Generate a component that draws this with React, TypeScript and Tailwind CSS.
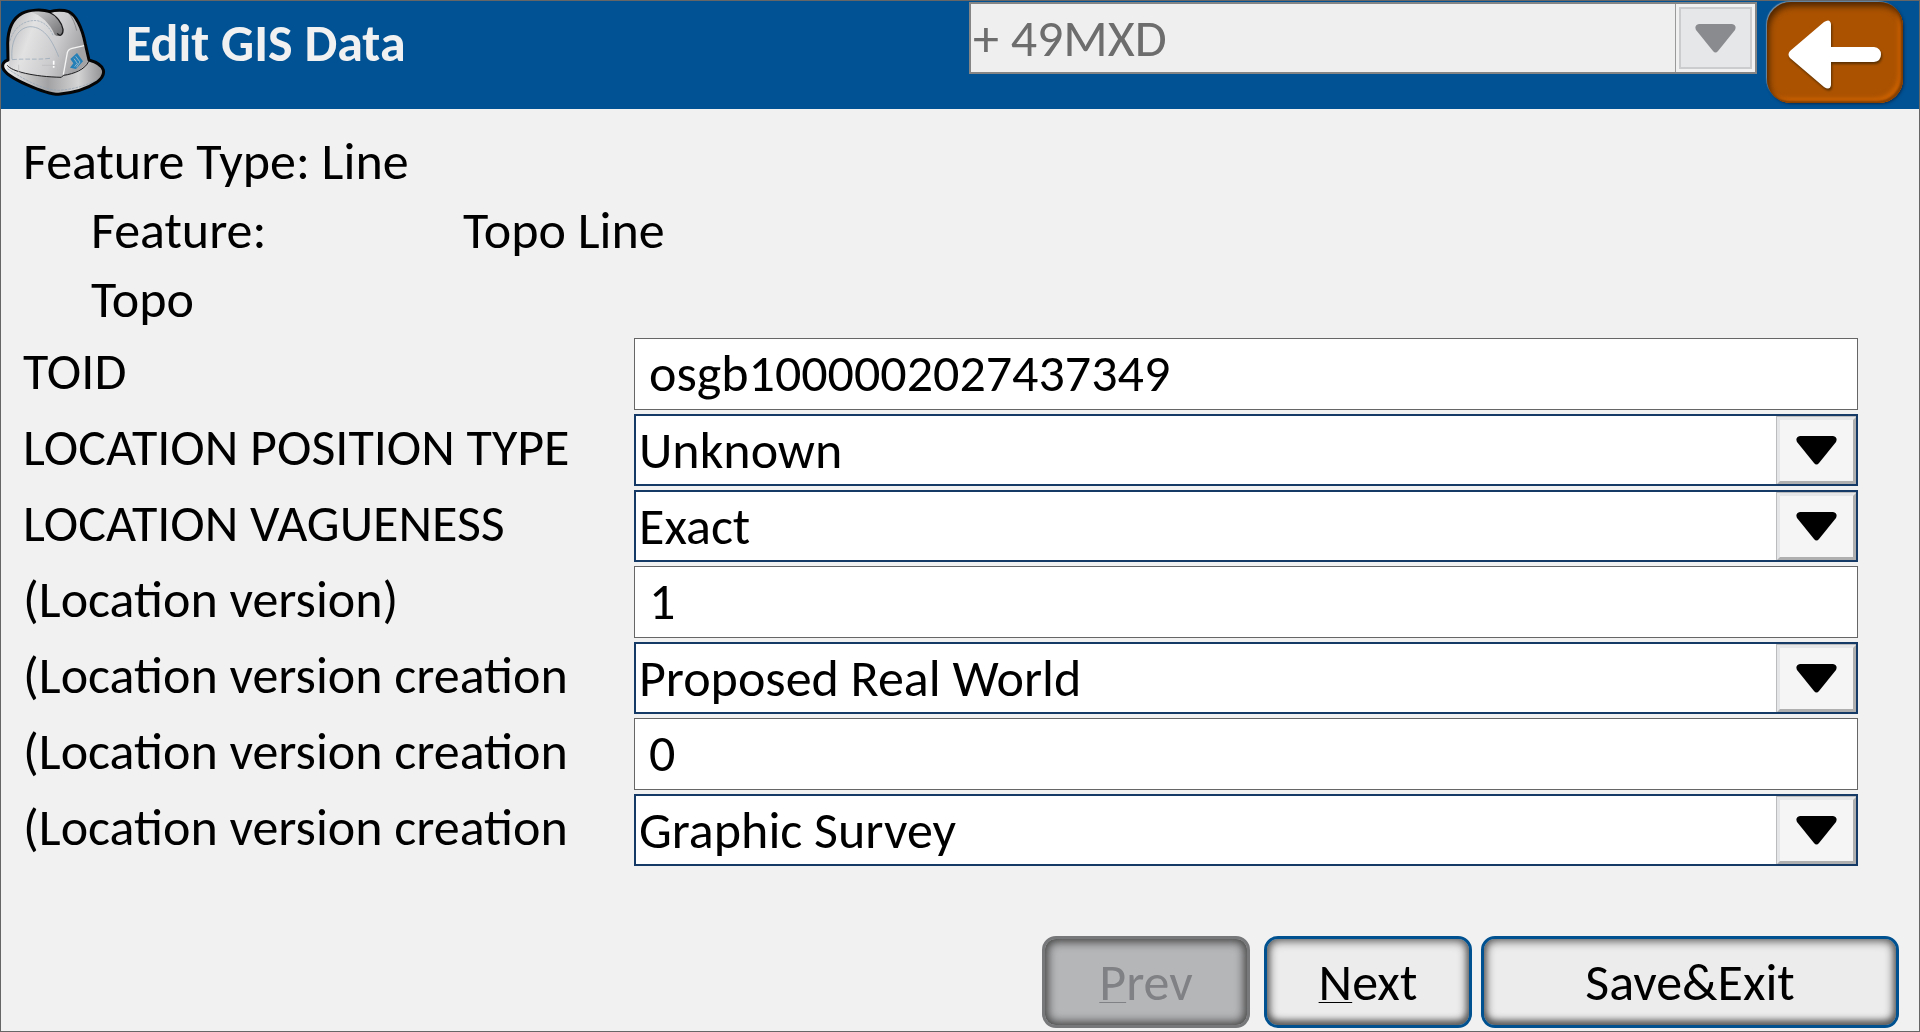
import React, { useState } from 'react';

interface Field {
    id: string;
    label: string;
    kind: 'text' | 'select';
    value: string;
    options?: string[];
}

const FIELDS: Field[] = [
    { id: 'toid', label: 'TOID', kind: 'text', value: 'osgb1000002027437349' },
    { id: 'positionType', label: 'LOCATION POSITION TYPE', kind: 'select', value: 'Unknown' },
    { id: 'vagueness', label: 'LOCATION VAGUENESS', kind: 'select', value: 'Exact' },
    { id: 'version', label: '(Location version)', kind: 'text', value: '1' },
    { id: 'creationState', label: '(Location version creation', kind: 'select', value: 'Proposed Real World' },
    { id: 'creationNumber', label: '(Location version creation', kind: 'text', value: '0' },
    { id: 'creationMethod', label: '(Location version creation', kind: 'select', value: 'Graphic Survey' },
];

const HAT_OUTLINE =
    'M24 180 C10 184 6 194 9 204 C13 218 40 236 80 254 C120 272 150 283 176 283 C220 279 262 266 290 247 C306 235 313 222 310 210 C306 196 288 186 267 180 L256 132 C246 80 226 44 206 35 C190 29 164 30 150 35 C126 27 88 29 66 40 C38 55 24 90 23 130 Z';

const HardHat: React.FC = () => (
    <svg viewBox="3 3 324 300" className="h-[100px] w-[108px] shrink-0" aria-hidden="true">
        <defs>
            <linearGradient id="shell" x1="0" y1="0" x2="1" y2="0.3">
                <stop offset="0" stopColor="#b4b4b6" />
                <stop offset="0.35" stopColor="#e2e2e3" />
                <stop offset="0.7" stopColor="#cbcbcd" />
                <stop offset="1" stopColor="#a3a3a6" />
            </linearGradient>
            <linearGradient id="brim" x1="0" y1="0" x2="1" y2="0">
                <stop offset="0" stopColor="#f2f2f2" />
                <stop offset="0.45" stopColor="#a2a2a4" />
                <stop offset="0.75" stopColor="#d4d4d5" />
                <stop offset="1" stopColor="#8f8f92" />
            </linearGradient>
            <linearGradient id="ridge" x1="0" y1="0" x2="1" y2="0.8">
                <stop offset="0" stopColor="#d0d0d1" />
                <stop offset="1" stopColor="#77777a" />
            </linearGradient>
        </defs>
        <path d={HAT_OUTLINE} fill="url(#brim)" />
        <path
            d="M27 182 C22 130 26 90 46 62 C62 40 92 30 128 33 C164 32 194 30 206 38 C228 52 244 92 252 132 L264 182 C258 202 224 220 188 230 C130 232 64 226 26 202 Z"
            fill="url(#shell)"
        />
        <path d="M92 36 C124 46 150 70 164 104 C176 114 190 104 189 88 C182 62 166 44 146 36 Z" fill="url(#ridge)" />
        <path d="M146 36 C170 46 186 70 189 88 C190 104 180 112 172 100" fill="none" stroke="#1d1d1f" strokeWidth="4" />
        <path d="M206 38 C218 54 226 72 230 92" fill="none" stroke="#88888b" strokeWidth="3" />
        <path d="M30 122 C42 82 74 58 112 62 C138 68 152 88 160 108" fill="none" stroke="#8fa1b2" strokeWidth="2" strokeDasharray="7 3" />
        <path d="M36 178 C32 130 48 84 90 80 C136 80 160 130 176 170" fill="none" stroke="#8fa1b2" strokeWidth="2" />
        <path d="M36 179 C82 175 110 180 150 175" fill="none" stroke="#8fa1b2" strokeWidth="2" strokeDasharray="14 6" />
        <path d="M22 196 C34 214 100 230 184 232 L190 226 C222 222 256 208 266 184" fill="none" stroke="#1b1b1d" strokeWidth="3" />
        <path d="M56 194 V216 L66 222 M126 196 H170 L176 224" fill="none" stroke="#b9b9bb" strokeWidth="2" />
        <path d="M161 182 V194 M161 198 V203" stroke="#fff" strokeWidth="5" />
        <path d="M190 224 L202 158 Q204 148 216 145 L256 136" fill="none" stroke="#f4f4f4" strokeWidth="4" />
        <path d="M22 206 C70 236 120 268 176 271 C220 268 262 256 292 238" fill="none" stroke="#8fa1b2" strokeWidth="2" strokeDasharray="8 3" />
        <path d={HAT_OUTLINE} fill="none" stroke="#050505" strokeWidth="9" strokeLinejoin="round" />
        <path d="M231 159 L249 184 L228 207 L210 203 L220 190 L211 177 Z" fill="#2580b8" />
        <path d="M222 176 L232 190 L224 200 M227 169 L240 186 L229 202" fill="none" stroke="#d0d0d2" strokeWidth="2" />
    </svg>
);

const BackArrow: React.FC = () => (
    <svg viewBox="0 0 96 72" className="mt-1 h-[72px] w-[96px] drop-shadow-[1px_2px_1px_#5b3000]" aria-hidden="true">
        <path
            d="M3 32 L37 3 Q43 -1 44 5 V28 H87 Q94 29 94 35.500 Q94 42 87 43 H44 V66 Q43 72 37 68 L3 39 Q0 35.500 3 32 Z"
            fill="#fff"
        />
    </svg>
);

const Triangle: React.FC<{ className: string }> = ({ className }) => (
    <svg viewBox="0 0 41 29" className={`h-[29px] w-[41px] ${className}`} aria-hidden="true">
        <path d="M4 0 H37 Q42 1 40 6 L23 27 Q20.500 30 18 27 L1 6 Q-1 1 4 0 Z" fill="currentColor" />
    </svg>
);

interface ComboProps {
    id: string;
    value: string;
    options: string[];
    onChange: (value: string) => void;
}

const Combo: React.FC<ComboProps> = ({ id, value, options, onChange }) => (
    <div className="relative h-[72px] border-2 border-[#153a66] bg-white">
        <select
            id={id}
            value={value}
            onChange={(e) => onChange(e.target.value)}
            className="h-full w-full appearance-none bg-white pr-20 pl-[3px] text-black outline-none"
        >
            {options.map((o) => (
                <option key={o}>{o}</option>
            ))}
        </select>
        <span className="pointer-events-none absolute inset-y-0 right-0 w-20 border-t border-l border-[#bbbcbd]">
            <span className="flex h-full items-center justify-center border-[3px] border-t-[#e4e6e7] border-r-[#afafaf] border-b-[#afafaf] border-l-[#e4e6e7] bg-[#f5f5f5]">
                <Triangle className="text-black" />
            </span>
        </span>
    </div>
);

const BUTTON =
    'h-[92px] rounded-[14px] border-[3px] border-[#00518f] bg-[#ececec] text-black shadow-[inset_0_0_10px_2px_#555,inset_0_-4px_6px_#777]';
const BUTTON_DISABLED =
    'h-[92px] rounded-[14px] border-[3px] border-[#77787a] bg-[#b5b6b8] text-[#808184] shadow-[inset_0_0_10px_3px_#444]';

export default function App() {
    const [values, setValues] = useState<Record<string, string>>(
        Object.fromEntries(FIELDS.map((f) => [f.id, f.value]))
    );

    const update = (id: string, value: string) => setValues((prev) => ({ ...prev, [id]: value }));

    return (
        <div className="flex min-h-screen flex-col border border-[#666] bg-[#f1f1f1] font-['Carlito','Lato',sans-serif] text-[52px] leading-[69px] text-black">
            {/* Title bar */}
            <header className="flex h-[108px] items-start bg-[#005294] pr-4">
                <HardHat />
                <h1 className="ml-[17px] flex-1 pt-2 font-bold text-[#f1f1f1]">Edit GIS Data</h1>
                <div className="relative mt-px h-[72px] w-[788px] border-2 border-[#858585] bg-[#efefef]">
                    <select
                        aria-label="Map document"
                        disabled
                        className="h-full w-full appearance-none pr-20 pl-[2px] text-[#6d6d6d] opacity-100"
                    >
                        <option>+ 49MXD</option>
                    </select>
                    <span className="pointer-events-none absolute inset-y-0 right-0 w-20 border-l border-[#999] bg-[#f1f1f1] p-[3px]">
                        <span className="flex h-full items-center justify-center border-2 border-[#cbccce] bg-[#e6e7e9]">
                            <Triangle className="text-[#8a8b8e]" />
                        </span>
                    </span>
                </div>
                <button
                    aria-label="Back"
                    className="mt-px ml-[10px] flex h-[101px] w-[136px] items-center justify-center rounded-3xl bg-[#aa5200] shadow-[inset_2px_4px_6px_#4d2500,inset_-2px_-2px_2px_#8a4200,inset_-5px_-5px_4px_#cc6200,1px_1px_3px_#0a2b50,-1px_-1px_1px_#7f98ad]"
                >
                    <BackArrow />
                </button>
            </header>

            <main className="flex flex-1 flex-col">
                <section className="pt-[18px] pl-[22px]">
                    <p>Feature Type: Line</p>
                    <div className="grid grid-cols-[372px_1fr] pl-[68px]">
                        <span>Feature:</span>
                        <span>Topo Line</span>
                        <span>Topo</span>
                    </div>
                </section>

                <form className="mt-1 flex flex-col gap-1 pr-[61px] pl-[22px]">
                    {FIELDS.map((f) => (
                        <div key={f.id} className="grid grid-cols-[611px_1fr]">
                            <label htmlFor={f.id} className="leading-[66px] whitespace-nowrap">
                                {f.label}
                            </label>
                            {f.kind === 'text' ? (
                                <input
                                    id={f.id}
                                    type="text"
                                    value={values[f.id]}
                                    onChange={(e) => update(f.id, e.target.value)}
                                    className="h-[72px] w-full border border-[#666] bg-white pb-[2px] pl-[14px] outline-none"
                                />
                            ) : (
                                <Combo
                                    id={f.id}
                                    value={values[f.id]}
                                    options={f.options ?? [f.value]}
                                    onChange={(v) => update(f.id, v)}
                                />
                            )}
                        </div>
                    ))}
                </form>

                <footer className="mt-auto flex justify-end gap-[9px] pr-[20px] pb-[3px]">
                    <div className="flex gap-[14px]">
                        <button disabled className={`w-[208px] ${BUTTON_DISABLED}`}>
                            <span className="underline decoration-1 underline-offset-2">P</span>rev
                        </button>
                        <button className={`w-[208px] ${BUTTON}`}>
                            <span className="underline decoration-1 underline-offset-2">N</span>ext
                        </button>
                    </div>
                    <button className={`w-[418px] ${BUTTON}`}>Save&amp;Exit</button>
                </footer>
            </main>
        </div>
    );
}
